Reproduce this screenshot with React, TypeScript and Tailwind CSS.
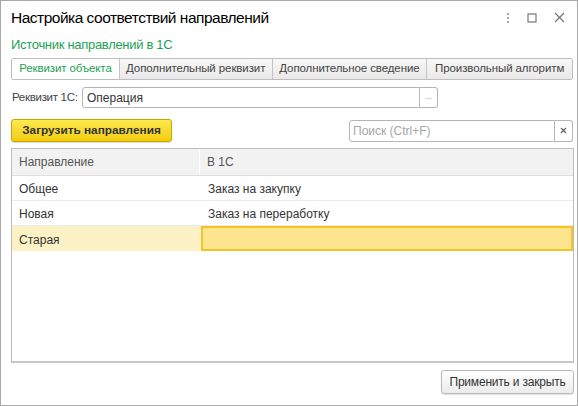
import React from "react";

export default function App() {
  const tabs = [
    { label: "Реквизит объекта", w: 107, active: true },
    { label: "Дополнительный реквизит", w: 153 },
    { label: "Дополнительное сведение", w: 155 },
    { label: "Произвольный алгоритм", w: 146 },
  ];
  const rows = [
    { a: "Общее", b: "Заказ на закупку" },
    { a: "Новая", b: "Заказ на переработку" },
    { a: "Старая", b: "", sel: true },
  ];
  return (
    <div
      className="w-[578px] h-[406px] border border-[#a8a8a8] bg-white flex flex-col text-[12px] text-[#333] whitespace-nowrap"
      style={{ fontFamily: '"Liberation Sans", Arial, sans-serif' }}
    >
      {/* Title bar */}
      <div className="h-[33px] flex items-center justify-between pl-[10px] pr-[12px]">
        <div className="text-[15.5px] tracking-[-0.5px] text-black">Настройка соответствий направлений</div>
        <div className="flex items-center gap-[17px] text-[#777]">
          <svg width="4" height="12" viewBox="0 0 4 12">
            <circle cx="2" cy="2" r="1" fill="#888" />
            <circle cx="2" cy="6" r="1" fill="#888" />
            <circle cx="2" cy="10" r="1" fill="#888" />
          </svg>
          <svg width="10" height="10" viewBox="0 0 10 10">
            <rect x="1" y="1" width="8" height="8" fill="none" stroke="#777" strokeWidth="1.2" />
          </svg>
          <svg width="11" height="11" viewBox="0 0 11 11">
            <path d="M1 1 L10 10 M10 1 L1 10" stroke="#777" strokeWidth="1.2" />
          </svg>
        </div>
      </div>

      <div className="flex flex-col pl-[10px] pr-[3px]">
        {/* Subtitle */}
        <div className="h-[22px] flex items-center text-[13px] tracking-[-0.3px] text-[#1f9f56]">
          Источник направлений в 1С
        </div>

        {/* Tabs */}
        <div className="mt-[2px] h-[22px] flex border border-[#bdbdbd] rounded-[2px] w-[562px] overflow-hidden">
          {tabs.map((t, i) => (
            <div
              key={i}
              style={{ width: t.w }}
              className={
                "h-full flex items-center justify-center text-[11.5px] tracking-[-0.1px] " +
                (i > 0 ? "border-l border-[#c4c4c4] " : "") +
                (t.active
                  ? "bg-white text-[#1f9f56]"
                  : "bg-gradient-to-b from-[#f7f7f7] to-[#e9e9e9] text-[#444]")
              }
            >
              {t.label}
            </div>
          ))}
        </div>

        {/* Attribute row */}
        <div className="mt-[7px] h-[21px] flex items-center">
          <div className="w-[71px] pl-[1px] text-[11.5px] text-[#444] tracking-[-0.3px]">Реквизит 1С:</div>
          <div className="flex h-[21px]">
            <div className="w-[338px] h-full border border-[#b5b5b5] rounded-l-[3px] flex items-center pl-[4px] text-[#333]">
              Операция
            </div>
            <div className="w-[18px] h-full border border-l-0 border-[#b5b5b5] rounded-r-[3px] flex items-center justify-center text-[9px] text-[#999] pb-[2px]">
              ...
            </div>
          </div>
        </div>

        {/* Button row */}
        <div className="mt-[11px] h-[23px] flex items-center justify-between">
          <div className="w-[161px] h-[23px] rounded-[3px] border border-[#c7a800] bg-gradient-to-b from-[#fdea4c] to-[#f2cc00] flex items-center justify-center font-bold text-[11.8px] text-[#333] shadow-[0_1px_1px_rgba(0,0,0,0.15)]">
            Загрузить направления
          </div>
          <div className="flex h-[22px] mr-[1px]">
            <div className="w-[206px] h-full border border-[#b5b5b5] rounded-l-[3px] flex items-center pl-[3px] text-[#a5a5a5]">
              Поиск (Ctrl+F)
            </div>
            <div className="w-[18px] h-full border border-l-0 border-[#b5b5b5] rounded-r-[3px] flex items-center justify-center">
              <svg width="7" height="7" viewBox="0 0 7 7">
                <path d="M1 1 L6 6 M6 1 L1 6" stroke="#666" strokeWidth="1.3" />
              </svg>
            </div>
          </div>
        </div>

        {/* Table */}
        <div className="mt-[6px] h-[215px] border border-[#bcbcbc] border-b-2 border-b-[#c8c8c8] flex flex-col">
          <div className="h-[27px] flex bg-[#f2f2f2] border-b border-[#dedede] text-[#555]">
            <div className="w-[188px] flex items-center pl-[7px] border-r border-white">Направление</div>
            <div className="flex-1 flex items-center pl-[7px]">В 1С</div>
          </div>
          {rows.map((r, i) => (
            <div
              key={i}
              className={"h-[25px] flex " + (r.sel ? "" : "border-b border-[#ebebeb]")}
            >
              <div
                className={
                  "w-[189px] flex items-center pl-[7px] pt-[2px] " + (r.sel ? "bg-[#fdf2c6]" : "")
                }
              >
                {r.a}
              </div>
              <div
                className={
                  "flex-1 flex items-center pl-[7px] pt-[2px] " +
                  (r.sel ? "bg-[#fde48e] border-2 border-[#f5c420]" : "")
                }
              >
                {r.b}
              </div>
            </div>
          ))}
        </div>

        {/* Footer */}
        <div className="mt-[7px] flex justify-end">
          <div className="w-[133px] h-[24px] rounded-[3px] border border-[#b8b8b8] bg-gradient-to-b from-[#ffffff] to-[#ececec] flex items-center justify-center text-[#333] tracking-[-0.2px] shadow-[0_1px_1px_rgba(0,0,0,0.12)]">
            Применить и закрыть
          </div>
        </div>
      </div>
    </div>
  );
}
